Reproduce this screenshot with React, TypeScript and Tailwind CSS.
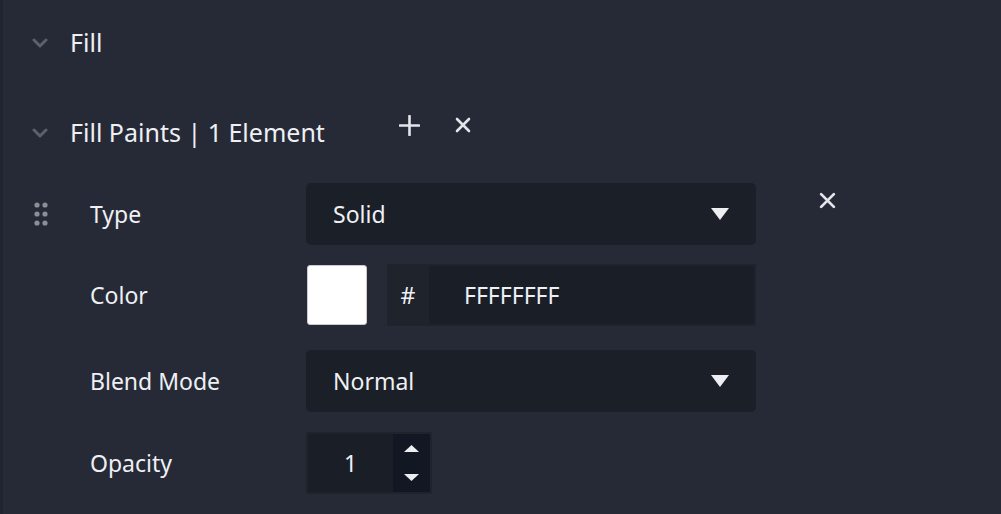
import { useState } from "react";

const Chevron = () => (
  <svg width="16" height="12" viewBox="0 0 16 12" className="shrink-0">
    <polyline points="2,3 8,9 14,3" fill="none" stroke="#5c606b" strokeWidth="3" strokeLinecap="round" strokeLinejoin="round" />
  </svg>
);

const Close = ({ size = 16 }: { size?: number }) => (
  <svg width={size} height={size} viewBox="0 0 16 16" className="shrink-0">
    <path d="M2 2 L14 14 M14 2 L2 14" stroke="#e4e5ea" strokeWidth="2.6" strokeLinecap="round" />
  </svg>
);

const Plus = () => (
  <svg width="21" height="21" viewBox="0 0 21 21" className="shrink-0">
    <path d="M10.5 1 V20 M1 10.5 H20" stroke="#e4e5ea" strokeWidth="2.6" strokeLinecap="round" />
  </svg>
);

const Caret = () => (
  <svg width="18" height="12" viewBox="0 0 18 12">
    <polygon points="0,0 18,0 9,12" fill="#eceef2" />
  </svg>
);

const DragDots = () => (
  <svg width="16" height="24" viewBox="0 0 16 24">
    {[3, 12, 21].map((y) =>
      [4, 12].map((x) => <circle key={`${x}-${y}`} cx={x} cy={y} r="2.6" fill="#8b8e97" />)
    )}
  </svg>
);

const Select = ({ value }: { value: string }) => (
  <div className="flex h-[62px] w-[450px] items-center justify-between rounded-[5px] bg-[#1b1f28] pl-[27px] pr-[27px]">
    <span>{value}</span>
    <Caret />
  </div>
);

export default function App() {
  const [opacity] = useState(1);

  return (
    <div
      className="h-[514px] w-[1001px] overflow-hidden border-l-[3px] border-[#21242e] bg-[#262a36] pl-[29px] text-[23px] text-[#eef0f4]"
      style={{ fontFamily: '"Noto Sans", "Open Sans", sans-serif' }}
    >
      {/* Fill header */}
      <div className="mt-[24px] flex h-[38px] items-center">
        <Chevron />
        <span className="ml-[22px] text-[25px]">Fill</span>
      </div>

      {/* Fill Paints header */}
      <div className="mt-[52px] flex h-[38px] items-center">
        <Chevron />
        <span className="ml-[22px] w-[329px] whitespace-nowrap text-[25px]">Fill Paints | 1 Element</span>
        <div className="-mt-[16px] flex items-center">
          <Plus />
          <span className="ml-[35px]">
            <Close />
          </span>
        </div>
      </div>

      {/* Type */}
      <div className="mt-[31px] flex items-center">
        <div className="w-[58px] pl-[1px]">
          <DragDots />
        </div>
        <span className="w-[216px]">Type</span>
        <Select value="Solid" />
        <div className="ml-[63px] -mt-[28px]">
          <Close size={17} />
        </div>
      </div>

      {/* Color */}
      <div className="mt-[19px] flex items-center">
        <div className="w-[58px]" />
        <span className="w-[216px]">Color</span>
        <div className="ml-[1px] h-[60px] w-[60px] rounded-[3px] border border-[#c9cbd0] bg-white" />
        <div className="ml-[20px] flex h-[62px] w-[369px] bg-[#1f232c] py-[2px] pr-[2px]">
          <span className="flex w-[42px] items-center justify-center">#</span>
          <div className="flex flex-1 items-center bg-[#1a1e27] pl-[35px]">FFFFFFFF</div>
        </div>
      </div>

      {/* Blend Mode */}
      <div className="mt-[24px] flex items-center">
        <div className="w-[58px]" />
        <span className="w-[216px]">Blend Mode</span>
        <Select value="Normal" />
      </div>

      {/* Opacity */}
      <div className="mt-[20px] flex items-center">
        <div className="w-[58px]" />
        <span className="w-[216px]">Opacity</span>
        <div className="flex h-[62px] w-[126px] border-2 border-[#1f232c] bg-[#1a1e27]">
          <div className="flex w-[85px] items-center justify-center">{opacity}</div>
          <div className="flex flex-1 flex-col items-center justify-between bg-[#131723] py-[11px]">
            <svg width="15" height="7" viewBox="0 0 15 7">
              <polygon points="0,7 15,7 7.5,0" fill="#eceef2" />
            </svg>
            <svg width="15" height="7" viewBox="0 0 15 7">
              <polygon points="0,0 15,0 7.5,7" fill="#eceef2" />
            </svg>
          </div>
        </div>
      </div>
    </div>
  );
}
